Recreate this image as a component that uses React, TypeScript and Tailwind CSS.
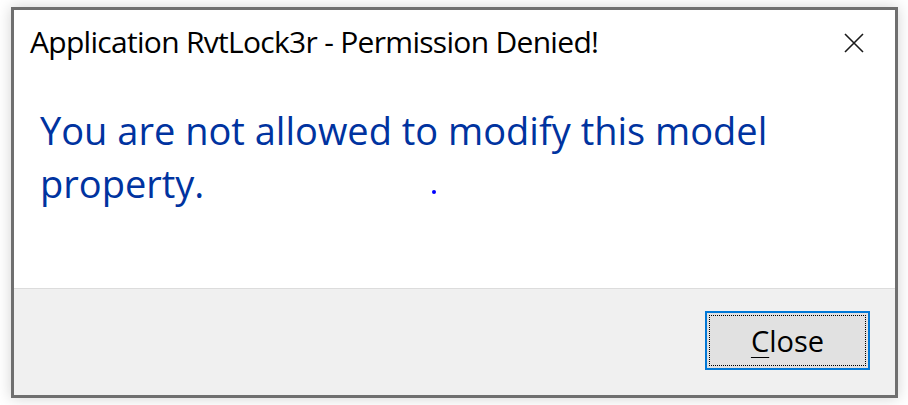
import React from 'react';

const font = { fontFamily: '"Open Sans", "Noto Sans", sans-serif' };

export default function App() {
  return (
    <div className="w-[908px] h-[405px] bg-white pl-[11px] pt-[7px]" style={font}>
      <div className="relative w-[887px] h-[391px] border-[3px] border-[#6f6f6f] bg-white flex flex-col shadow-[0_0_14px_rgba(0,0,0,0.18)]">
        {/* title row */}
        <div className="flex items-start justify-between h-[64px] pl-[16px] pr-[31px] pt-[13px]">
          <span className="text-[30px] leading-[38px] text-black tracking-[-0.7px]">Application RvtLock3r - Permission Denied!</span>
          <svg width="20" height="20" viewBox="0 0 20 20" className="mt-[10px]">
            <path d="M1 1 L19 19 M19 1 L1 19" stroke="#1a1a1a" strokeWidth="1.6" />
          </svg>
        </div>

        {/* message */}
        <div className="flex-1 pl-[26px] pt-[30px] pr-[20px]">
          <p className="text-[38px] leading-[53px] text-[#0033a0] w-[780px]">
            You are not allowed to modify this model property.
          </p>
        </div>
        <div className="absolute left-[418px] top-[180px] w-[4px] h-[4px] rounded-full bg-[#0000ff]" />

        {/* footer */}
        <div className="h-[107px] bg-[#f0f0f0] border-t border-[#dcdcdc] flex justify-end items-start pt-[22px] pr-[25px]">
          <button className="w-[165px] h-[59px] border-2 border-[#0078d7] bg-[#e1e1e1] p-[2px]">
            <div className="w-full h-full border border-dotted border-black flex items-center justify-center text-[29px] leading-none text-black">
              <span><span className="underline underline-offset-[5px] decoration-1">C</span>lose</span>
            </div>
          </button>
        </div>
      </div>
    </div>
  );
}
